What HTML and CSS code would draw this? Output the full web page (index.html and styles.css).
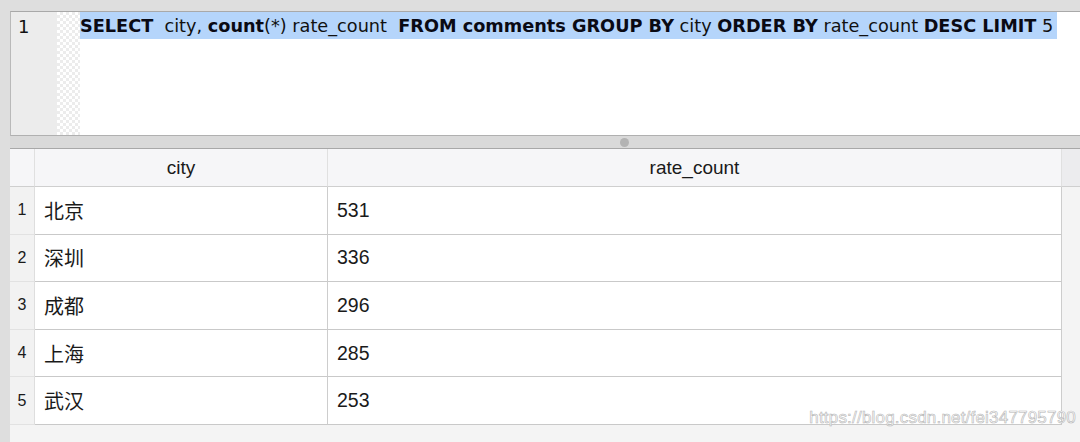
FILE: index.html
```html
<!DOCTYPE html>
<html>
<head>
    <link rel="stylesheet" href="styles.css">
</head>
<body>
    <div class="editor">
        <div class="gutter">1</div>
        <div class="checker"></div>
        <div class="code">
            <span class="sel"><b>SELECT</b>&nbsp; city, <b>count</b>(*) rate_count&nbsp; <b>FROM comments GROUP BY</b> city <b>ORDER BY</b> rate_count <b>DESC LIMIT</b> 5</span>
        </div>
    </div>

    <div class="splitter"><span class="knob"></span></div>

    <div class="results">
        <div class="grid">
            <div class="head num"></div>
            <div class="head">city</div>
            <div class="head">rate_count</div>
            <div class="head filler"></div>

            <div class="cell num">1</div><div class="cell cn">北京</div><div class="cell">531</div><div class="filler"></div>
            <div class="cell num">2</div><div class="cell cn">深圳</div><div class="cell">336</div><div class="filler"></div>
            <div class="cell num">3</div><div class="cell cn">成都</div><div class="cell">296</div><div class="filler"></div>
            <div class="cell num">4</div><div class="cell cn">上海</div><div class="cell">285</div><div class="filler"></div>
            <div class="cell num">5</div><div class="cell cn">武汉</div><div class="cell">253</div><div class="filler"></div>

            <div class="num empty"></div><div class="empty"></div><div class="empty"></div><div class="empty"></div>
        </div>
        <div class="watermark">https://blog.csdn.net/fei347795790</div>
    </div>
</body>
</html>
```

FILE: styles.css
```css
body {
    margin: 0;
    background-color: #dedede;
    font-family: "Liberation Sans", "Noto Sans CJK SC", sans-serif;
    width: 1080px;
    height: 442px;
    overflow: hidden;
    padding-top: 11px;
    box-sizing: border-box;
}

.editor {
    margin-left: 10px;
    height: 125px;
    display: flex;
    border-top: 1px solid #a9a9a9;
    border-left: 1px solid #b9b9b9;
    border-bottom: 1px solid #b0b0b0;
    background-color: #fff;
    box-sizing: border-box;
}
.gutter {
    width: 46px;
    background-color: #ececec;
    font-family: "DejaVu Sans", sans-serif;
    font-size: 18px;
    padding: 4px 0 0 7px;
    box-sizing: border-box;
    color: #111;
}
.checker {
    width: 23px;
    background-color: #fff;
    background-image:
        linear-gradient(45deg, #ececec 25%, transparent 25%, transparent 75%, #ececec 75%),
        linear-gradient(45deg, #ececec 25%, transparent 25%, transparent 75%, #ececec 75%);
    background-size: 6px 6px;
    background-position: 0 0, 3px 3px;
}
.code {
    flex: 1;
    font-family: "DejaVu Sans", sans-serif;
    font-size: 17.7px;
    color: #111;
    white-space: nowrap;
}
.sel {
    display: inline-block;
    background-color: #b5d5fb;
    height: 27px;
    line-height: 28px;
    padding-right: 4px;
}
.sel b {
    color: #0a0a14;
}

.splitter {
    height: 12px;
    margin-left: 10px;
    background-color: #d9d9d9;
    border-bottom: 1px solid #a8a8a8;
    display: flex;
    justify-content: center;
    align-items: center;
    padding-left: 158px;
}
.knob {
    width: 9px;
    height: 9px;
    border-radius: 50%;
    background-color: #b3b3b3;
}

.results {
    position: relative;
    margin-left: 10px;
    background-color: #f4f4f4;
    height: 300px;
}
.grid {
    display: grid;
    grid-template-columns: 25px 293px 734px 1fr;
    grid-template-rows: 38px repeat(5, 47.6px) 1fr;
}
.head {
    background-color: #f6f6f8;
    border-bottom: 1px solid #cfcfcf;
    border-right: 1px solid #e0e0e0;
    display: flex;
    align-items: center;
    justify-content: center;
    font-size: 19px;
    color: #1a1a1a;
    padding-top: 1px;
}
.head.filler {
    border-right: none;
    background-color: #ececee;
}
.cell {
    background-color: #fff;
    border-bottom: 1px solid #c9c9c9;
    border-right: 1px solid #cdcdcd;
    display: flex;
    align-items: center;
    padding-left: 9px;
    font-size: 19.5px;
    color: #1a1a1a;
}
.cell.cn {
    font-family: "Noto Sans CJK SC", sans-serif;
    font-size: 20px;
    font-weight: 400;
}
.cell.num {
    background-color: #f2f2f2;
    padding-left: 0;
    justify-content: center;
    font-size: 16px;
    border-right: 1px solid #dedede;
    border-bottom: 1px solid #e2e2e2;
}
.filler {
    background-color: #f4f4f4;
}
.empty {
    background-color: #f4f4f4;
}
.num.empty {
    background-color: #e8e8e8;
}

.watermark {
    position: absolute;
    right: 4px;
    top: 259px;
    font-family: "Liberation Sans", sans-serif;
    font-size: 17px;
    color: #fff;
    -webkit-text-stroke: 0.6px #b5b5b5;
    letter-spacing: 0.2px;
}
```
